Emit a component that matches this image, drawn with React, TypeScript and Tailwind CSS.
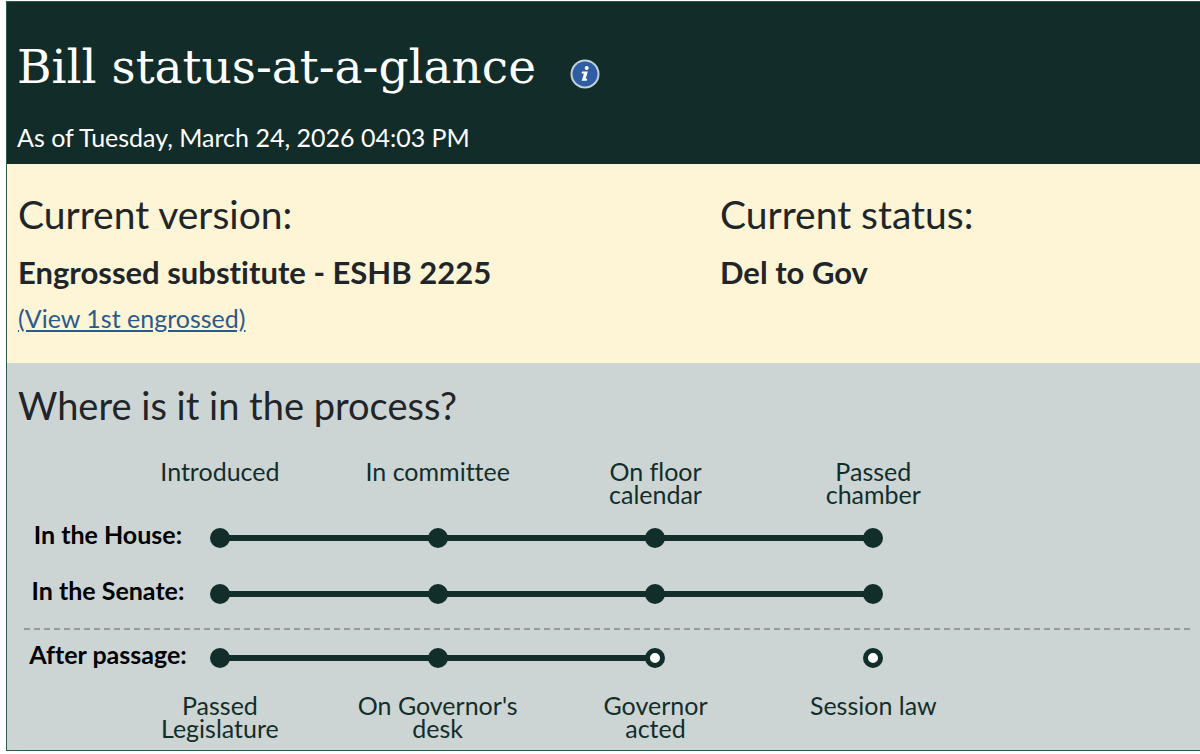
import clsx from "clsx";

const houseSteps = [
  "Introduced",
  "In committee",
  "On floor calendar",
  "Passed chamber",
];

const passageSteps = [
  "Passed Legislature",
  "On Governor's desk",
  "Governor acted",
  "Session law",
];

const GRID = "grid grid-cols-[104px_repeat(10,minmax(0,1fr))]";

const InfoIcon = () => (
  <svg className="size-[30px]" viewBox="0 0 30 30" aria-hidden="true">
    <circle cx="15" cy="15" r="14.5" fill="#c3d0d8" />
    <circle cx="15" cy="15" r="12.5" fill="#2f5da4" />
    <circle cx="16.7" cy="8.9" r="2" fill="#fff" />
    <path
      d="M12 12.4h5.8l-2.1 7.4h1.6l-.5 2h-5l2.1-7.4h-2.4z"
      fill="#fff"
    />
  </svg>
);

const StepNames = ({ names }: { names: string[] }) => (
  <ol className={clsx(GRID, "text-center text-[25px] leading-[23px]")}>
    {names.map((name, index) => (
      <li
        key={name}
        className={clsx("col-span-2 px-6", index === 0 && "col-start-2")}
      >
        {name}
      </li>
    ))}
  </ol>
);

type TrackProps = {
  label: string;
  done: number;
  lineTo: number;
};

// Dots sit on the grid lines, lines fill the space between them.
const Track = ({ label, done, lineTo }: TrackProps) => (
  <div className={clsx(GRID, "h-14 items-center")}>
    <h3 className="col-span-2 pr-[11px] pb-2 text-center text-[25px] leading-8 font-bold text-black">
      {label}
    </h3>
    <div className="col-span-6 -mx-[10px] flex items-center">
      {[0, 1, 2, 3].map((step) => (
        <div
          key={step}
          className={clsx("flex items-center", step > 0 && "flex-1")}
        >
          {step > 0 && (
            <div
              className={clsx(
                "-mx-px h-[6px] flex-1",
                step <= lineTo && "bg-[#122e2b]"
              )}
            />
          )}
          <div
            className={clsx(
              "size-5 rounded-full border-[#122e2b]",
              step < done ? "bg-[#122e2b]" : "border-[5px] bg-white"
            )}
          />
        </div>
      ))}
    </div>
  </div>
);

const App = () => {
  return (
    <main className="bg-white pt-px pb-[3px] pl-[6px] font-['Lato',sans-serif] [font-variant-ligatures:none]">
      <div className="border-y border-l border-[#2b5c4b]">
        <header className="bg-[#122c29] px-[10px] pt-8 pb-[10px] text-white">
          <div className="flex items-center gap-[34px]">
            <h1 className="font-['DejaVu_Serif',serif] text-[47px] leading-[66px]">
              Bill status-at-a-glance
            </h1>
            <button type="button" aria-label="About bill status" className="pt-[14px]">
              <InfoIcon />
            </button>
          </div>
          <p className="mt-5 text-[25px] leading-[34px]">
            As of Tuesday, March 24, 2026 04:03 PM
          </p>
        </header>

        <section className="grid grid-cols-[702px_1fr] bg-[#fdf5d5] px-[11px] pt-[26px] pb-[27px] text-[#212529]">
          <div>
            <h2 className="text-[39px] leading-[48px]">Current version:</h2>
            <p className="mt-[14px] text-[31px] leading-10 font-bold">
              Engrossed substitute - ESHB 2225
            </p>
            <a
              href="#engrossed"
              className="mt-2 inline-block text-[25px] leading-9 text-[#2a5a8c] underline"
            >
              (View 1st engrossed)
            </a>
          </div>
          <div>
            <h2 className="text-[39px] leading-[48px]">Current status:</h2>
            <p className="mt-[14px] text-[31px] leading-10 font-bold">Del to Gov</p>
          </div>
        </section>

        <section className="bg-[#cdd5d4] pt-[18px] pb-[10px] text-[#122e2b]">
          <h2 className="px-[11px] text-[38px] leading-[48px] text-[#212529]">
            Where is it in the process?
          </h2>
          <div className="mt-[31px]">
            <StepNames names={houseSteps} />
            <div className="mt-1">
              <Track label="In the House:" done={4} lineTo={3} />
              <Track label="In the Senate:" done={4} lineTo={3} />
            </div>
            <hr className="mt-[6px] mr-[10px] ml-[17px] border-t-2 border-dashed border-[#999]" />
            <Track label="After passage:" done={2} lineTo={2} />
            <div className="mt-2">
              <StepNames names={passageSteps} />
            </div>
          </div>
        </section>
      </div>
    </main>
  );
};

export default App;
